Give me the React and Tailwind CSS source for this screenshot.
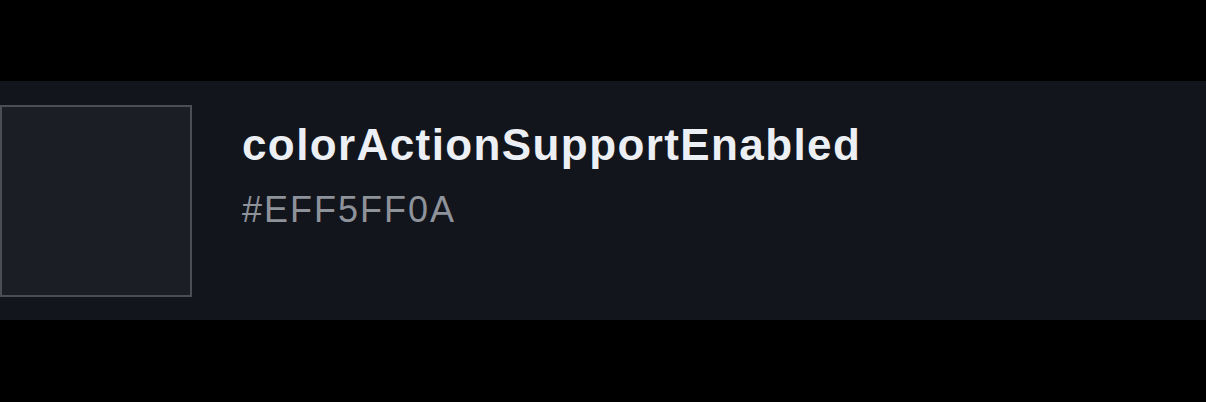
export default function App() {
  return (
    <div className="h-[402px] w-full bg-black pt-[81px]" style={{ fontFamily: '"Liberation Sans", Arial, sans-serif' }}>
      <div className="flex h-[239px] items-start bg-[#12151b] pt-[24px]">
        <div className="h-[192px] w-[192px] shrink-0 border-2 border-[#4b4e56] bg-[#1b1e25]" />
        <div className="ml-[50px] flex flex-col pt-[16px]">
          <h3 className="text-[44px] font-bold leading-[48px] tracking-[1.4px] text-[#eceff4]">colorActionSupportEnabled</h3>
          <p className="mt-[21px] text-[36px] leading-[40px] tracking-[2px] text-[#8e929b]">#EFF5FF0A</p>
        </div>
      </div>
    </div>
  );
}
